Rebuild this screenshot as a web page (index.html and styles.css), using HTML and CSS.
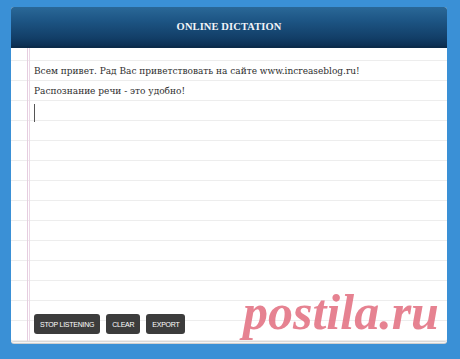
FILE: index.html
```html
<!DOCTYPE html>
<html>
<head>
<meta charset="utf-8">
<link rel="stylesheet" href="styles.css">
</head>
<body>
<div class="card">
  <div class="header"><h1 class="title">ONLINE DICTATION</h1></div>
  <div class="paper">
    <div class="text">
      <p class="line">Всем привет. Рад Вас приветствовать на сайте www.increaseblog.ru!</p>
      <p class="line">Распознание речи - это удобно!</p>
      <p class="line"><span class="caret"></span></p>
    </div>
    <div class="buttons">
      <button class="btn">STOP LISTENING</button>
      <button class="btn">CLEAR</button>
      <button class="btn">EXPORT</button>
    </div>
  </div>
</div>
<div class="watermark">postila.ru</div>
</body>
</html>
```
FILE: styles.css
```css
html, body {
  margin: 0;
  padding: 0;
}
body {
  width: 460px;
  height: 359px;
  background: #3a90d6;
  padding: 7px 0 0 11px;
  box-sizing: border-box;
  overflow: hidden;
  position: relative;
}
.card {
  width: 436px;
  height: 334px;
  display: flex;
  flex-direction: column;
  border-radius: 3px;
  box-shadow: 0 1px 0 #d9d9d9, 0 2px 0 #f4f4f4, 0 3px 0 #cfcfcf;
  background: #fff;
}
.header {
  height: 41px;
  flex: none;
  display: flex;
  align-items: center;
  justify-content: center;
  border-radius: 3px 3px 0 0;
  background: linear-gradient(#2a6898 0%, #1d5584 35%, #123e67 80%, #0c2f52 100%);
  border-bottom: 2px solid #0b2b4a;
  box-sizing: border-box;
}
.title {
  margin: 0;
  color: #f2f4f8;
  font-family: "Liberation Serif", serif;
  font-weight: bold;
  font-size: 10.5px;
  letter-spacing: 0.1px;
}
.paper {
  flex: 1;
  display: flex;
  flex-direction: column;
  background-color: #fff;
  background-image:
    linear-gradient(to right, transparent 16px, #e6cde0 16px, #e6cde0 17px, transparent 17px, transparent 18px, #ecd8e6 18px, #ecd8e6 19px, transparent 19px),
    repeating-linear-gradient(to bottom, #ededed 0, #ededed 1px, transparent 1px, transparent 20px);
  background-position: 0 0, 0 12px;
  border-radius: 0 0 3px 3px;
}
.text {
  flex: 1;
  padding: 13px 0 0 23px;
  font-family: "DejaVu Serif Condensed", "DejaVu Serif", serif;
  font-stretch: condensed;
  font-size: 10px;
  color: #2e2e2e;
}
.line {
  margin: 0;
  height: 20px;
  line-height: 20px;
}
.caret {
  display: inline-block;
  width: 1px;
  height: 18px;
  background: #555;
  vertical-align: top;
  margin-top: 3px;
}
.buttons {
  display: flex;
  gap: 6px;
  padding: 0 0 7px 23px;
}
.btn {
  height: 20px;
  padding: 0 6px;
  border: none;
  border-radius: 3px;
  background: #3c3c3c;
  color: #fff;
  font-family: "Liberation Sans", sans-serif;
  font-size: 7px;
  letter-spacing: -0.25px;
}
.watermark {
  position: absolute;
  left: 243px;
  top: 282px;
  font-family: "Liberation Serif", serif;
  font-weight: bold;
  font-style: italic;
  font-size: 50px;
  line-height: 60px;
  color: rgba(226, 108, 126, 0.85);
}
```
